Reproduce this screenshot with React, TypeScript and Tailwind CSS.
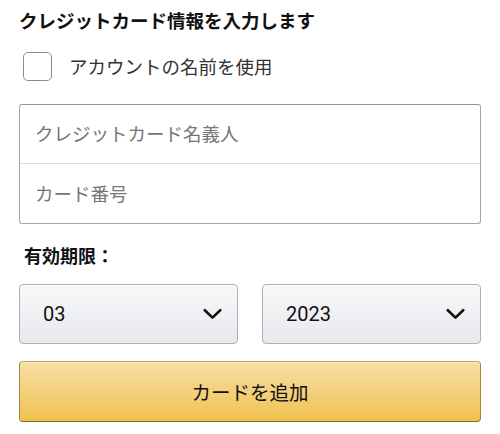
import { useState } from 'react';

const jp = "font-['Noto_Sans_CJK_JP','Noto_Sans',sans-serif]";

const Chevron = () => (
    <svg width="19" height="12" viewBox="0 0 19 12" fill="none">
        <path d="M1.8 2.2 L9.5 9.6 L17.2 2.2" stroke="#111" strokeWidth="2.6" strokeLinecap="round" strokeLinejoin="round" />
    </svg>
);

const SelectBox = ({ value }: { value: string }) => (
    <div className="flex-1 h-[60px] flex items-center justify-between pl-[23px] pr-[15px] rounded-[4px] border border-[#adb1b8] bg-gradient-to-b from-[#f7f8fa] to-[#e7e9ec] shadow-[0_1px_0_rgba(255,255,255,0.6)_inset]">
        <span className="text-[20px] text-[#111] font-['Roboto','Liberation_Sans',sans-serif]">{value}</span>
        <Chevron />
    </div>
);

const App = () => {
    const [useAccountName, setUseAccountName] = useState(false);

    return (
        <div className={`w-[500px] h-[434px] bg-white px-[19px] overflow-hidden ${jp}`}>
            <h1 className="mt-[8px] text-[18.5px] leading-[24px] font-bold text-[#111]">
                クレジットカード情報を入力します
            </h1>

            {/* Use account name */}
            <label className="mt-[20px] flex items-center gap-[17px] pl-[4px] cursor-pointer">
                <span
                    onClick={() => setUseAccountName(!useAccountName)}
                    className="w-[29px] h-[29px] rounded-[5px] border-[1.5px] border-[#888c8c] bg-white"
                />
                <span className="text-[18.5px] leading-[29px] text-[#333]">アカウントの名前を使用</span>
            </label>

            {/* Card fields */}
            <div className="mt-[23px] h-[120px] flex flex-col rounded-[3px] border border-[#a6a6a6] border-t-[#949494]">
                <div className="h-[59px] flex items-center px-[15px] border-b border-[#dcdcdc]">
                    <span className="text-[18.5px] text-[#767676]">クレジットカード名義人</span>
                </div>
                <div className="flex-1 flex items-center px-[15px]">
                    <span className="text-[18.5px] text-[#767676]">カード番号</span>
                </div>
            </div>

            {/* Expiry */}
            <div className="mt-[19px] pl-[5px] text-[18px] leading-[24px] font-bold text-[#111]">有効期限：</div>
            <div className="mt-[17px] flex gap-[24px]">
                <SelectBox value="03" />
                <SelectBox value="2023" />
            </div>

            <button className="mt-[17px] w-full h-[61px] rounded-[4px] border border-[#a88734] border-t-[#c8a550] border-b-[#846a29] bg-gradient-to-b from-[#f7dfa5] to-[#f0c14b] shadow-[0_1px_0_rgba(255,255,255,0.4)_inset] text-[19.5px] text-[#111]">
                カードを追加
            </button>
        </div>
    );
};

export default App;
